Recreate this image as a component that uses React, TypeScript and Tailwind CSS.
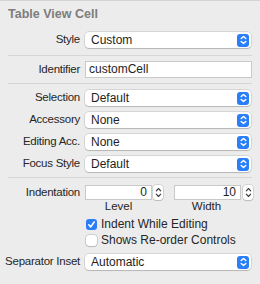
import React from 'react';

const font = { fontFamily: '"Liberation Sans", Arial, sans-serif' };

const PopupArrows: React.FC = () => (
  <div className="w-[12px] h-[13px] rounded-[3px] bg-[#2a7ef7] flex items-center justify-center">
    <svg width="7" height="10" viewBox="0 0 7 10" fill="none" stroke="white" strokeWidth="1.4" strokeLinecap="round" strokeLinejoin="round">
      <path d="M1.2 3.6 L3.5 1.4 L5.8 3.6" />
      <path d="M1.2 6.4 L3.5 8.6 L5.8 6.4" />
    </svg>
  </div>
);

const Popup: React.FC<{ value: string }> = ({ value }) => (
  <div className="w-[166px] h-[16px] bg-white rounded-[4px] shadow-[0_0_0_0.5px_rgba(0,0,0,0.18),0_1px_1px_rgba(0,0,0,0.15)] flex items-center pl-[6px] pr-[2px]">
    <span className="flex-1 text-[12px] leading-[16px] text-[#1e1e1e]">{value}</span>
    <PopupArrows />
  </div>
);

const Row: React.FC<{ label: string; className?: string; children: React.ReactNode }> = ({ label, className, children }) => (
  <div className={`flex items-center ${className ?? ''}`}>
    <div className="w-[80px] text-right text-[11.5px] tracking-[-0.25px] text-[#262626] whitespace-nowrap">{label}</div>
    <div className="ml-[5px] flex">{children}</div>
  </div>
);

const Stepper: React.FC = () => (
  <div className="w-[10px] h-[15px] bg-white rounded-[3px] shadow-[0_0_0_0.5px_rgba(0,0,0,0.2),0_1px_1px_rgba(0,0,0,0.12)] flex items-center justify-center">
    <svg width="7" height="11" viewBox="0 0 7 11" fill="none" stroke="#3a3a3a" strokeWidth="1.1" strokeLinecap="round" strokeLinejoin="round">
      <path d="M1.3 3.8 L3.5 1.5 L5.7 3.8" />
      <path d="M1.3 7.2 L3.5 9.5 L5.7 7.2" />
    </svg>
  </div>
);

const NumberField: React.FC<{ value: string }> = ({ value }) => (
  <div className="w-[67px] h-[15px] bg-white border border-[#c9c9c9] text-right pr-[4px] text-[12px] leading-[13px] text-[#1e1e1e]">
    {value}
  </div>
);

const Separator: React.FC<{ className?: string }> = ({ className }) => (
  <div className={`mx-[8px] h-px bg-[#d6d6d6] ${className ?? ''}`} />
);

const Check: React.FC<{ checked?: boolean; label: string; className?: string }> = ({ checked, label, className }) => (
  <div className={`flex items-center pl-[86px] h-[14px] ${className ?? ''}`}>
    {checked ? (
      <div className="w-[11px] h-[11px] rounded-[3px] bg-[#2a7ef7] flex items-center justify-center">
        <svg width="9" height="9" viewBox="0 0 9 9" fill="none" stroke="white" strokeWidth="1.6" strokeLinecap="round" strokeLinejoin="round">
          <path d="M1.8 4.8 L3.7 6.9 L7.2 2" />
        </svg>
      </div>
    ) : (
      <div className="w-[11px] h-[11px] rounded-[3px] bg-white shadow-[0_0_0_0.5px_rgba(0,0,0,0.25),0_1px_1px_rgba(0,0,0,0.1)]" />
    )}
    <span className="ml-[4px] text-[12px] text-[#262626] whitespace-nowrap">{label}</span>
  </div>
);

export default function App() {
  return (
    <div className="w-[260px] h-[284px] bg-[#ececec] flex flex-col overflow-hidden" style={font}>
      <div className="h-px bg-[#d4d4d4]" />
      <div className="mt-[5px] h-[16px] leading-[16px] pl-[8px] text-[12.5px] font-bold text-[#7d7d7d]">Table View Cell</div>

      <Row label="Style" className="mt-[10px] h-[16px]">
        <Popup value="Custom" />
      </Row>
      <Separator className="mt-[7px]" />

      <Row label="Identifier" className="mt-[5px] h-[17px]">
        <div className="w-[167px] h-[17px] bg-white border border-[#c9c9c9] pl-[3px] text-[12px] leading-[15px] text-[#1e1e1e]">customCell</div>
      </Row>
      <Separator className="mt-[5px]" />

      <Row label="Selection" className="mt-[6px] h-[16px]">
        <Popup value="Default" />
      </Row>
      <Row label="Accessory" className="mt-[6px] h-[16px]">
        <Popup value="None" />
      </Row>
      <Row label="Editing Acc." className="mt-[6px] h-[16px]">
        <Popup value="None" />
      </Row>
      <Row label="Focus Style" className="mt-[6px] h-[16px]">
        <Popup value="Default" />
      </Row>
      <Separator className="mt-[5px]" />

      <Row label="Indentation" className="mt-[7px] h-[15px]">
        <div className="flex items-center">
          <NumberField value="0" />
          <div className="ml-[1px]"><Stepper /></div>
          <div className="ml-[11px]"><NumberField value="10" /></div>
          <div className="ml-[2px]"><Stepper /></div>
        </div>
      </Row>
      <div className="flex h-[13px] leading-[13px] text-[11.5px] text-[#262626]">
        <div className="ml-[85px] w-[67px] text-center">Level</div>
        <div className="ml-[21px] w-[67px] text-center">Width</div>
      </div>

      <Check checked label="Indent While Editing" className="mt-[4px]" />
      <Check label="Shows Re-order Controls" className="mt-[2px]" />

      <Row label="Separator Inset" className="mt-[7px] h-[16px]">
        <Popup value="Automatic" />
      </Row>
    </div>
  );
}
